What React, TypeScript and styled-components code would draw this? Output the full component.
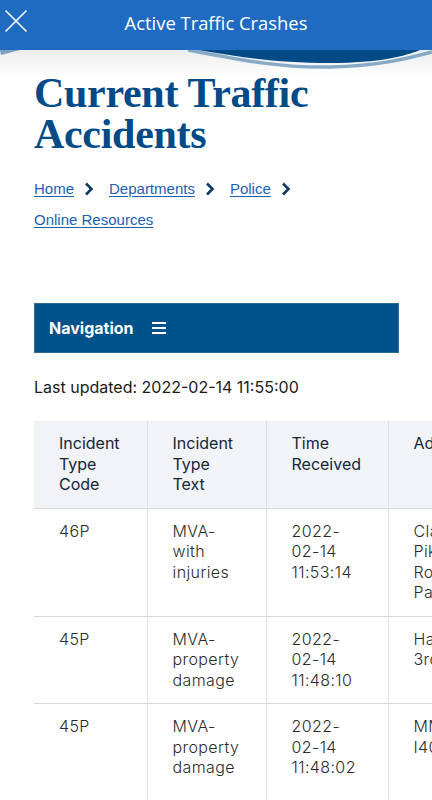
import React from 'react';
import styled, { createGlobalStyle } from 'styled-components';

const GlobalStyle = createGlobalStyle`
  html, body {
    margin: 0;
    padding: 0;
    background: #ffffff;
    overflow-x: hidden;
  }
  * {
    box-sizing: border-box;
  }
`;

const Page = styled.div`
  width: 432px;
  min-height: 800px;
  font-family: 'Inter', 'Liberation Sans', sans-serif;
  overflow: hidden;
`;

const TopBar = styled.header`
  height: 50px;
  background: #1f6bc1;
  display: flex;
  align-items: center;
  justify-content: center;
  position: relative;
`;

const CloseButton = styled.button`
  position: absolute;
  left: 4px;
  top: 9px;
  width: 24px;
  height: 24px;
  padding: 0;
  border: none;
  background: transparent;
  display: flex;
  align-items: center;
  justify-content: center;
`;

const TopTitle = styled.h1`
  margin: -6px 0 0;
  color: #ffffff;
  font-family: 'Open Sans', 'Liberation Sans', sans-serif;
  font-size: 18.4px;
  font-weight: 400;
`;

const WaveStrip = styled.svg`
  display: block;
  width: 432px;
  height: 26px;
`;

const Content = styled.main`
  padding: 0 33px 0 34px;
`;

const PageTitle = styled.h2`
  margin: -3px 0 0;
  font-family: 'Liberation Serif', 'DejaVu Serif', serif;
  font-weight: 700;
  font-size: 42px;
  line-height: 41px;
  color: #004a87;
  letter-spacing: -0.3px;
`;

const Crumbs = styled.nav`
  margin-top: 23px;
  display: flex;
  flex-wrap: wrap;
  align-items: center;
  row-gap: 9px;
  font-family: 'Liberation Sans', sans-serif;
  font-size: 15px;
  line-height: 22px;
`;

const CrumbItem = styled.span`
  display: inline-flex;
  align-items: center;
`;

const CrumbLink = styled.a`
  color: #1a5fb4;
  text-decoration: underline;
  text-underline-offset: 2px;
`;

const Chevron = styled.svg`
  width: 10px;
  height: 14px;
  margin: 0 15px 0 10px;
`;

const NavBar = styled.div`
  margin-top: 72px;
  height: 50px;
  background: #00528a;
  border: 1px solid #2c6a98;
  display: flex;
  align-items: center;
  padding-left: 14px;
  gap: 17px;
  color: #ffffff;
  font-size: 16px;
  font-weight: 700;
`;

const Updated = styled.p`
  margin: 23px 0 0;
  font-size: 16px;
  color: #1a1a1a;
  line-height: 22px;
`;

const TableWrap = styled.div`
  margin-top: 23px;
  width: 700px;
`;

const Table = styled.table`
  border-collapse: collapse;
  table-layout: fixed;
  width: 624px;
`;

const HeadCell = styled.th<{ $w: number }>`
  width: ${(p) => p.$w}px;
  background: #f1f3f6;
  text-align: left;
  vertical-align: top;
  padding: 12px 20px 13px 25px;
  font-size: 16px;
  font-weight: 400;
  line-height: 20.5px;
  color: #14263a;
  border-left: 1px solid #dcdfe3;
  border-bottom: 1px solid #d6d9dd;

  &:first-child {
    border-left: none;
  }
`;

const Cell = styled.td<{ $pr: number }>`
  vertical-align: top;
  padding: 12px ${(p) => p.$pr}px 13px 25px;
  font-size: 16px;
  font-weight: 300;
  line-height: 20.5px;
  letter-spacing: 0.4px;
  color: #2b2b2b;
  border-left: 1px solid #dcdfe3;
  border-bottom: 1px solid #d6d9dd;

  &:first-child {
    border-left: none;
  }
`;

const columns = [
  { label: 'Incident Type Code', w: 113, pr: 20 },
  { label: 'Incident Type Text', w: 119, pr: 27 },
  { label: 'Time Received', w: 122, pr: 33 },
  { label: 'Address', w: 130, pr: 40 },
  { label: 'City', w: 140, pr: 40 },
];

const rows = [
  { id: 1, cells: ['46P', 'MVA-with injuries', '2022-02-14 11:53:14', 'Clarksville Pike Rosa Parks', 'Nashville'] },
  { id: 2, cells: ['45P', 'MVA-property damage', '2022-02-14 11:48:10', 'Harding 3rd Ave', 'Nashville'] },
  { id: 3, cells: ['45P', 'MVA-property damage', '2022-02-14 11:48:02', 'MM204 I40 E', 'Hermitage Davidson County Line'] },
];

const crumbs = ['Home', 'Departments', 'Police', 'Online Resources'];

export default function App() {
  return (
    <Page>
      <GlobalStyle />
      <TopBar>
        <CloseButton aria-label="Close">
          <svg width="22" height="22" viewBox="0 0 22 22">
            <path d="M1 1 L21 21 M21 1 L1 21" stroke="#ffffff" strokeWidth="1.6" strokeLinecap="round" />
          </svg>
        </CloseButton>
        <TopTitle>Active Traffic Crashes</TopTitle>
      </TopBar>
      <WaveStrip viewBox="0 0 432 26" preserveAspectRatio="none">
        <defs>
          <linearGradient id="fade" x1="0" y1="0" x2="0" y2="1">
            <stop offset="0" stopColor="#ececec" />
            <stop offset="1" stopColor="#ffffff" />
          </linearGradient>
        </defs>
        <rect x="0" y="0" width="432" height="26" fill="url(#fade)" />
        <path d="M0 0 L20 0 L1 5 Z" fill="#7d9fbe" />
        <path d="M188 0 C240 10 280 18 330 17 C380 16 410 8 432 2" stroke="#86a9c6" strokeWidth="3.5" fill="none" />
        <path d="M198 0 C245 8 280 13 330 13 C380 13 405 6 420 0 Z" fill="#004a86" />
      </WaveStrip>
      <Content>
        <PageTitle>
          Current Traffic
          <br />
          Accidents
        </PageTitle>
        <Crumbs>
          {crumbs.map((c, i) => (
            <CrumbItem key={c}>
              <CrumbLink href="#">{c}</CrumbLink>
              {i < crumbs.length - 1 && (
                <Chevron viewBox="0 0 10 14">
                  <path d="M2 1.5 L7.5 7 L2 12.5" stroke="#0c3a66" strokeWidth="2.6" fill="none" />
                </Chevron>
              )}
            </CrumbItem>
          ))}
        </Crumbs>
        <NavBar>
          Navigation
          <svg width="16" height="14" viewBox="0 0 16 14">
            <path d="M1 2 H15 M1 7 H15 M1 12 H15" stroke="#ffffff" strokeWidth="1.8" />
          </svg>
        </NavBar>
        <Updated>Last updated: 2022-02-14 11:55:00</Updated>
        <TableWrap>
          <Table>
            <thead>
              <tr>
                {columns.map((col) => (
                  <HeadCell key={col.label} $w={col.w}>
                    {col.label}
                  </HeadCell>
                ))}
              </tr>
            </thead>
            <tbody>
              {rows.map((r) => (
                <tr key={r.id}>
                  {r.cells.map((c, i) => (
                    <Cell key={i} $pr={columns[i].pr}>
                      {c}
                    </Cell>
                  ))}
                </tr>
              ))}
            </tbody>
          </Table>
        </TableWrap>
      </Content>
    </Page>
  );
}
